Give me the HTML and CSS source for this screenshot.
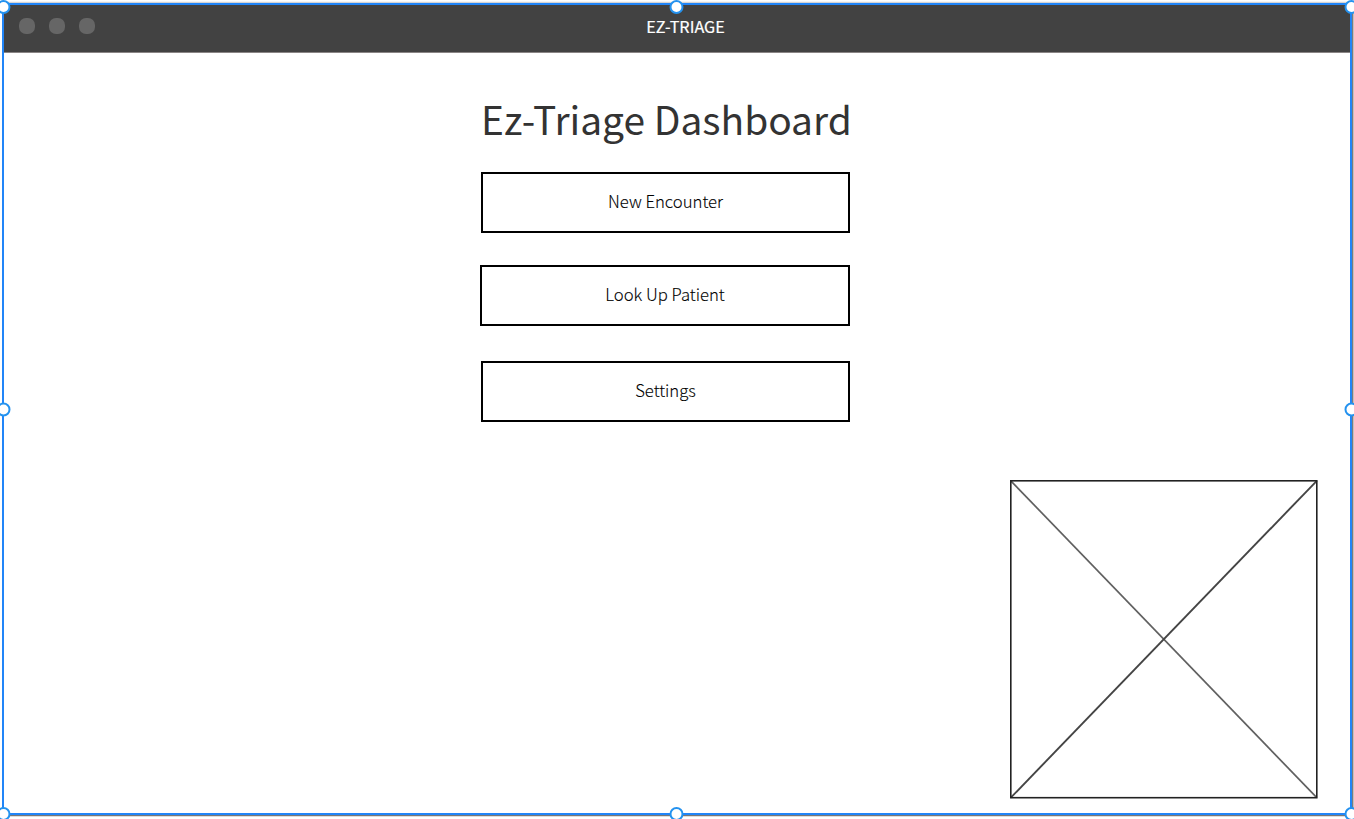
FILE: index.html
```
<!DOCTYPE html>
<html lang="en">
<head>
<meta charset="utf-8">
<title>EZ-TRIAGE</title>
<link rel="stylesheet" href="styles.css">
</head>
<body>
<div class="window">
  <header class="titlebar">
    <div class="lights"><span class="light"></span><span class="light"></span><span class="light"></span></div>
    <div class="app-name">EZ-TRIAGE</div>
  </header>
  <main class="content">
    <section class="menu">
      <h1 class="heading">Ez-Triage Dashboard</h1>
      <button class="choice">New Encounter</button>
      <button class="choice choice-lookup">Look Up Patient</button>
      <button class="choice">Settings</button>
    </section>
    <svg class="placeholder" width="308" height="319" viewBox="0 0 308 319">
      <path class="diagonal" d="M.8 .8L306.8 317.7"/>
      <path class="diagonal diagonal-dark" d="M306.8 .8L.8 317.7"/>
      <rect class="frame" x=".8" y=".8" width="306" height="316.9"/>
    </svg>
  </main>
</div>
<svg class="selection" width="1354" height="819" viewBox="0 0 1354 819">
  <path class="shadow shadow-top" d="M2 2.5H1352"/>
  <path class="shadow" d="M4 815.5H1353M1352.75 5V816"/>
  <rect class="outline" x="3" y="4" width="1348" height="810"/>
  <g class="handles">
    <circle cx="3.5" cy="7" r="6"/><circle cx="676.5" cy="7" r="6"/><circle cx="1351.5" cy="7" r="6"/>
    <circle cx="3.5" cy="409.5" r="6"/><circle cx="1351.5" cy="409.5" r="6"/>
    <circle cx="3.5" cy="814" r="6"/><circle cx="676.5" cy="814" r="6"/><circle cx="1351.5" cy="814" r="6"/>
  </g>
</svg>
</body>
</html>
```
FILE: styles.css
```
* { box-sizing: border-box; }
body {
  margin: 0;
  background: #fff;
  overflow: hidden;
  font-family: "Noto Sans CJK SC", "Noto Sans", sans-serif;
}
.window {
  width: 1354px;
  height: 819px;
  padding: 4px 3px 3px;
  display: flex;
  flex-direction: column;
}
.titlebar {
  height: 49px;
  flex: none;
  display: grid;
  grid-template-columns: 1fr auto 1fr;
  background: #424242;
  border-bottom: 1px solid #8a8585;
}
.lights { display: flex; gap: 14px; padding: 13.5px 0 0 15.7px; }
.light { width: 16px; height: 16px; border-radius: 7px; background: #666; }
.app-name {
  grid-column: 2;
  margin-right: -17px;
  padding-top: 11px;
  font-size: 16.2px;
  line-height: 22px;
  color: #fff;
  -webkit-text-stroke: .2px #fff;
}
.content { flex: 1; display: flex; justify-content: space-between; padding: 0 33px 0 477px; }
.menu { width: 370px; padding-top: 35px; display: flex; flex-direction: column; align-items: flex-end; }
.heading {
  margin: 0 0 24px;
  width: 369px;
  height: 60px;
  line-height: 60px;
  font-size: 38.9px;
  font-weight: 400;
  color: #333;
  white-space: nowrap;
}
.choice {
  width: 369px;
  height: 61px;
  flex: none;
  padding: 0 0 3px;
  border: 2px solid #000;
  background: #fff;
  font: 300 16.7px/24px "Noto Sans CJK SC", "Noto Sans", sans-serif;
  color: #000;
  -webkit-text-stroke: .1px #000;
}
.choice-lookup { width: 370px; margin: 32px 0 35px; }
.placeholder { margin-top: 427px; }
.frame { fill: none; stroke: #222; stroke-width: 1.6; }
.diagonal { fill: none; stroke: #606060; stroke-width: 1.7; }
.diagonal-dark { stroke: #444; stroke-width: 1.9; }
.selection { position: absolute; left: 0; top: 0; pointer-events: none; }
.shadow { fill: none; stroke: #777; stroke-width: 1.4; }
.shadow-top { stroke: #d5d5d5; }
.outline { fill: none; stroke: #2185f8; stroke-width: 2; }
.handles { fill: #fff; stroke: #2492ef; stroke-width: 2; }
```
